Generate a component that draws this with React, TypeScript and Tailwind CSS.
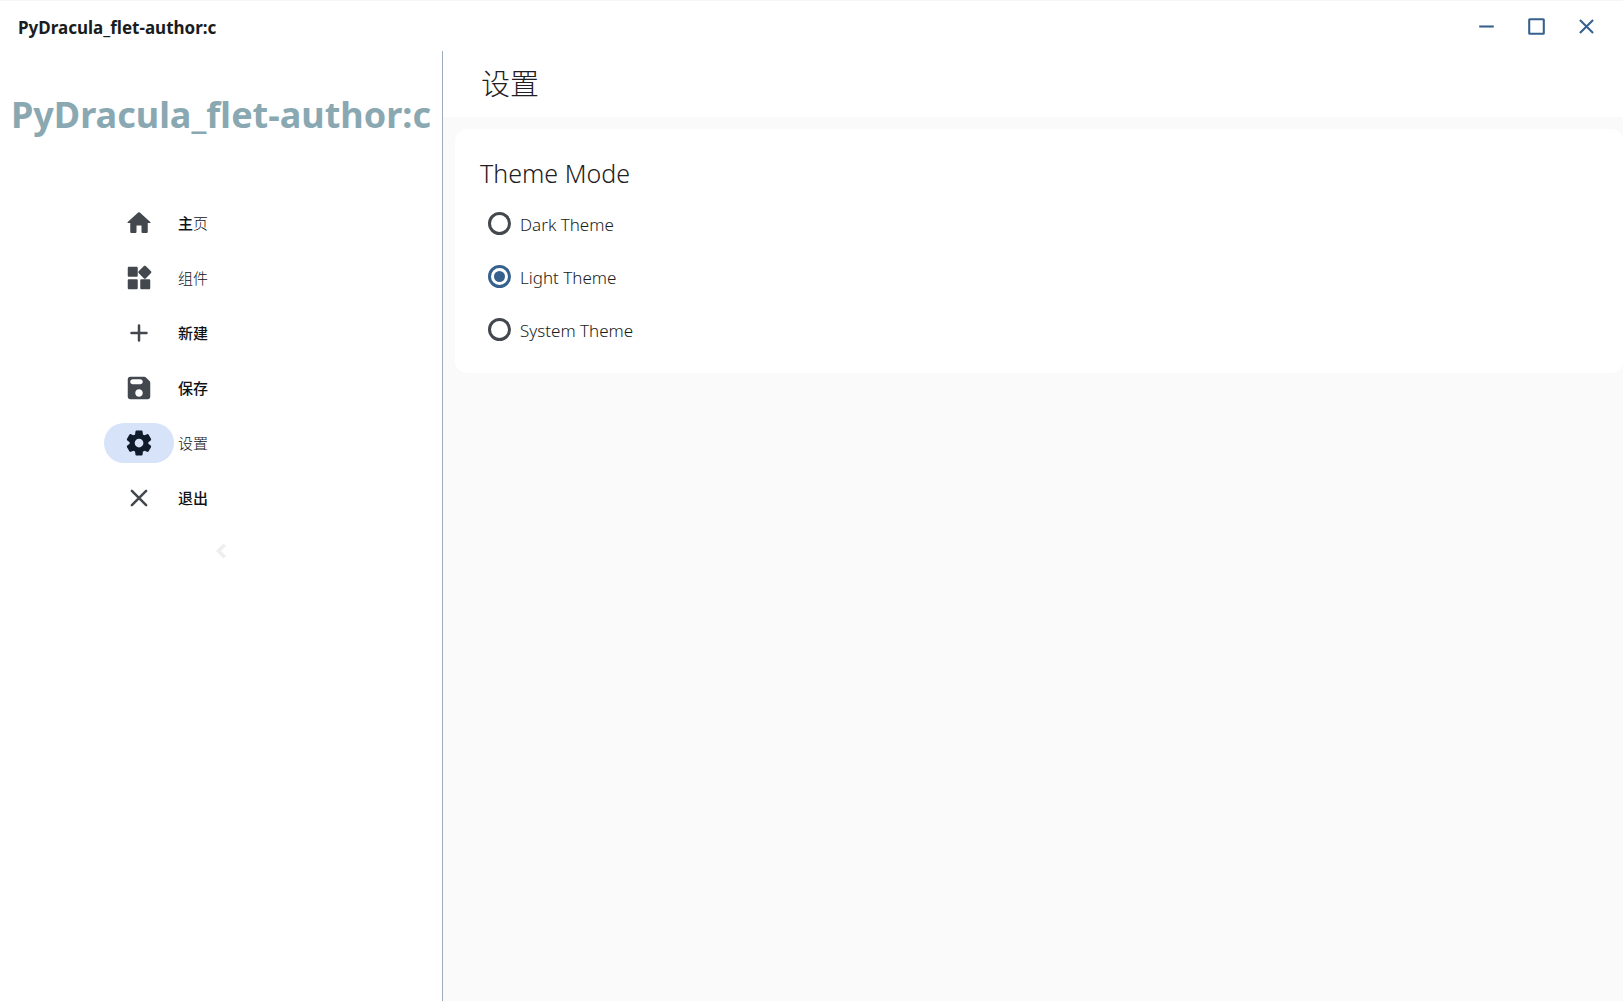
import { useState } from "react";
import type { ReactNode } from "react";

type NavItem = { id: string; label: ReactNode; icon: ReactNode };

const navItems: NavItem[] = [
  {
    id: "home",
    label: (
      <>
        <span className="font-medium">主</span>
        <span className="font-light">页</span>
      </>
    ),
    icon: (
      <path d="M10 19v-5h4v5c0 .55.45 1 1 1h3c.55 0 1-.45 1-1v-7h1.7c.46 0 .68-.57.33-.87L12.67 3.6c-.38-.34-.96-.34-1.34 0l-8.36 7.53c-.34.3-.13.87.33.87H5v7c0 .55.45 1 1 1h3c.55 0 1-.45 1-1z" />
    ),
  },
  {
    id: "widgets",
    label: <span className="font-light">组件</span>,
    icon: (
      <path d="M13 14v6c0 .55.45 1 1 1h6c.55 0 1-.45 1-1v-6c0-.55-.45-1-1-1h-6c-.55 0-1 .45-1 1zm-9 7h6c.55 0 1-.45 1-1v-6c0-.55-.45-1-1-1H4c-.55 0-1 .45-1 1v6c0 .55.45 1 1 1zM3 4v6c0 .55.45 1 1 1h6c.55 0 1-.45 1-1V4c0-.55-.45-1-1-1H4c-.55 0-1 .45-1 1zm12.95-1.6L11.7 6.64c-.39.39-.39 1.02 0 1.41l4.25 4.25c.39.39 1.02.39 1.41 0l4.25-4.25c.39-.39.39-1.02 0-1.41L17.37 2.4c-.39-.39-1.03-.39-1.42 0z" />
    ),
  },
  {
    id: "new",
    label: <span className="font-medium">新建</span>,
    icon: <path d="M12 6v12M6 12h12" fill="none" stroke="currentColor" strokeWidth="2" strokeLinecap="round" />,
  },
  {
    id: "save",
    label: <span className="font-medium">保存</span>,
    icon: (
      <path d="M17.59 3.59c-.38-.38-.89-.59-1.42-.59H5c-1.11 0-2 .9-2 2v14c0 1.1.9 2 2 2h14c1.1 0 2-.9 2-2V7.83c0-.53-.21-1.04-.59-1.41l-2.82-2.83zM12 19c-1.66 0-3-1.34-3-3s1.34-3 3-3 3 1.34 3 3-1.34 3-3 3zm1-10H7c-1.1 0-2-.9-2-2s.9-2 2-2h6c1.1 0 2 .9 2 2s-.9 2-2 2z" />
    ),
  },
  {
    id: "settings",
    label: <span className="font-light">设置</span>,
    icon: (
      <path d="M19.5 12c0-.23-.01-.45-.03-.68l1.86-1.41c.4-.3.51-.86.26-1.3l-1.87-3.23c-.25-.44-.79-.62-1.25-.42l-2.15.91c-.37-.26-.76-.49-1.17-.68l-.29-2.31c-.06-.5-.49-.88-.99-.88h-3.73c-.51 0-.94.38-1 .88l-.29 2.31c-.41.19-.8.42-1.17.68l-2.15-.91c-.46-.2-1-.02-1.25.42L2.41 8.62c-.25.44-.14.99.26 1.3l1.86 1.41c-.02.22-.03.44-.03.67s.01.45.03.68l-1.86 1.41c-.4.3-.51.86-.26 1.3l1.87 3.23c.25.44.79.62 1.25.42l2.15-.91c.37.26.76.49 1.17.68l.29 2.31c.06.5.49.88.99.88h3.73c.5 0 .93-.38.99-.88l.29-2.31c.41-.19.8-.42 1.17-.68l2.15.91c.46.2 1 .02 1.25-.42l1.87-3.23c.25-.44.14-.99-.26-1.3l-1.86-1.41c.03-.23.04-.45.04-.68zm-7.46 3.5c-1.93 0-3.5-1.57-3.5-3.5s1.57-3.5 3.5-3.5 3.5 1.57 3.5 3.5-1.57 3.5-3.5 3.5z" />
    ),
  },
  {
    id: "exit",
    label: <span className="font-medium">退出</span>,
    icon: <path d="M6.3 6.3l11.4 11.4M17.7 6.3L6.3 17.7" fill="none" stroke="currentColor" strokeWidth="2" strokeLinecap="round" />,
  },
];

const windowControls = [
  { label: "Minimize", shape: <path d="M5 12h14" /> },
  { label: "Maximize", shape: <rect x="5" y="5" width="14" height="14" rx="0.5" /> },
  { label: "Close", shape: <path d="M5.7 5.7l12.6 12.6M18.3 5.7L5.7 18.3" /> },
];

const themes = ["Dark Theme", "Light Theme", "System Theme"];

function TitleBar() {
  return (
    <header className="flex h-[51px] shrink-0 items-center justify-between border-t border-[#f5f5f5] pr-3 pl-[18px]">
      <span className="pt-[3px] text-[17px] leading-6 font-bold text-[#191c20]">PyDracula_flet-author:c</span>
      <div className="flex">
        {windowControls.map((control) => (
          <button
            key={control.label}
            type="button"
            aria-label={control.label}
            className="flex size-[50px] items-center justify-center text-[#36618e]"
          >
            <svg viewBox="0 0 24 24" className="size-[25px]" fill="none" stroke="currentColor" strokeWidth="2">
              {control.shape}
            </svg>
          </button>
        ))}
      </div>
    </header>
  );
}

function Sidebar({ active, onSelect }: { active: string; onSelect: (id: string) => void }) {
  return (
    <aside className="flex w-[443px] shrink-0 flex-col border-r border-[#9eabb8]">
      <h1 className="mt-9 text-center text-4xl leading-[56px] font-bold whitespace-nowrap text-[#89a8b2]">
        PyDracula_flet-author:c
      </h1>
      <nav className="mt-[60px] flex flex-col gap-[15px] pl-[104px]">
        {navItems.map((item) => (
          <button
            key={item.id}
            type="button"
            onClick={() => onSelect(item.id)}
            aria-current={item.id === active ? "page" : undefined}
            className="group flex h-10 w-[234px] items-center gap-1 text-[15px] text-[#101214]"
          >
            <span className="flex h-10 w-[70px] items-center justify-center rounded-full text-[#43474e] group-aria-[current=page]:bg-[#d7e3f8] group-aria-[current=page]:text-[#101c2b]">
              <svg viewBox="0 0 24 24" className="size-[30px]" fill="currentColor" aria-hidden="true">
                {item.icon}
              </svg>
            </span>
            <span>{item.label}</span>
          </button>
        ))}
      </nav>
      <button
        type="button"
        aria-label="Collapse sidebar"
        className="mt-[18px] flex size-[30px] self-center text-[#eeeeee]"
      >
        <svg viewBox="0 0 24 24" className="size-[30px]" fill="none" stroke="currentColor" strokeWidth="3">
          <path d="M15 7l-5 5 5 5" />
        </svg>
      </button>
    </aside>
  );
}

function ThemeCard() {
  const [theme, setTheme] = useState("Light Theme");
  return (
    <fieldset className="mt-3 ml-3 rounded-xl bg-white px-[25px] pt-[23px] pb-[17px]">
      <legend className="float-left text-[25px] leading-[42px] font-light text-[#1f2022]">Theme Mode</legend>
      <div className="clear-both flex flex-col pt-[3px]">
        {themes.map((name) => (
          <label key={name} className="flex h-[53px] w-fit items-center gap-[9px] pl-2 text-[17px] font-light text-[#191c20]">
            <input
              type="radio"
              name="theme"
              value={name}
              checked={theme === name}
              onChange={() => setTheme(name)}
              className="flex size-[23px] appearance-none items-center justify-center rounded-full border-[3px] border-[#43474e] before:size-[11px] before:rounded-full checked:border-[#36618e] checked:before:bg-[#36618e] checked:before:content-['']"
            />
            <span className="pt-0.5">{name}</span>
          </label>
        ))}
      </div>
    </fieldset>
  );
}

export default function App() {
  const [active, setActive] = useState("settings");
  return (
    <div className="flex min-h-screen flex-col bg-white font-['Noto_Sans','Noto_Sans_CJK_SC',sans-serif]">
      <TitleBar />
      <div className="flex grow">
        <Sidebar active={active} onSelect={setActive} />
        <main className="flex grow flex-col bg-[#fafafa]">
          <div className="flex h-[66px] items-center bg-white pl-[38px]">
            <h2 className="text-[29px] font-light text-[#1f2022]">设置</h2>
          </div>
          <ThemeCard />
        </main>
      </div>
    </div>
  );
}
